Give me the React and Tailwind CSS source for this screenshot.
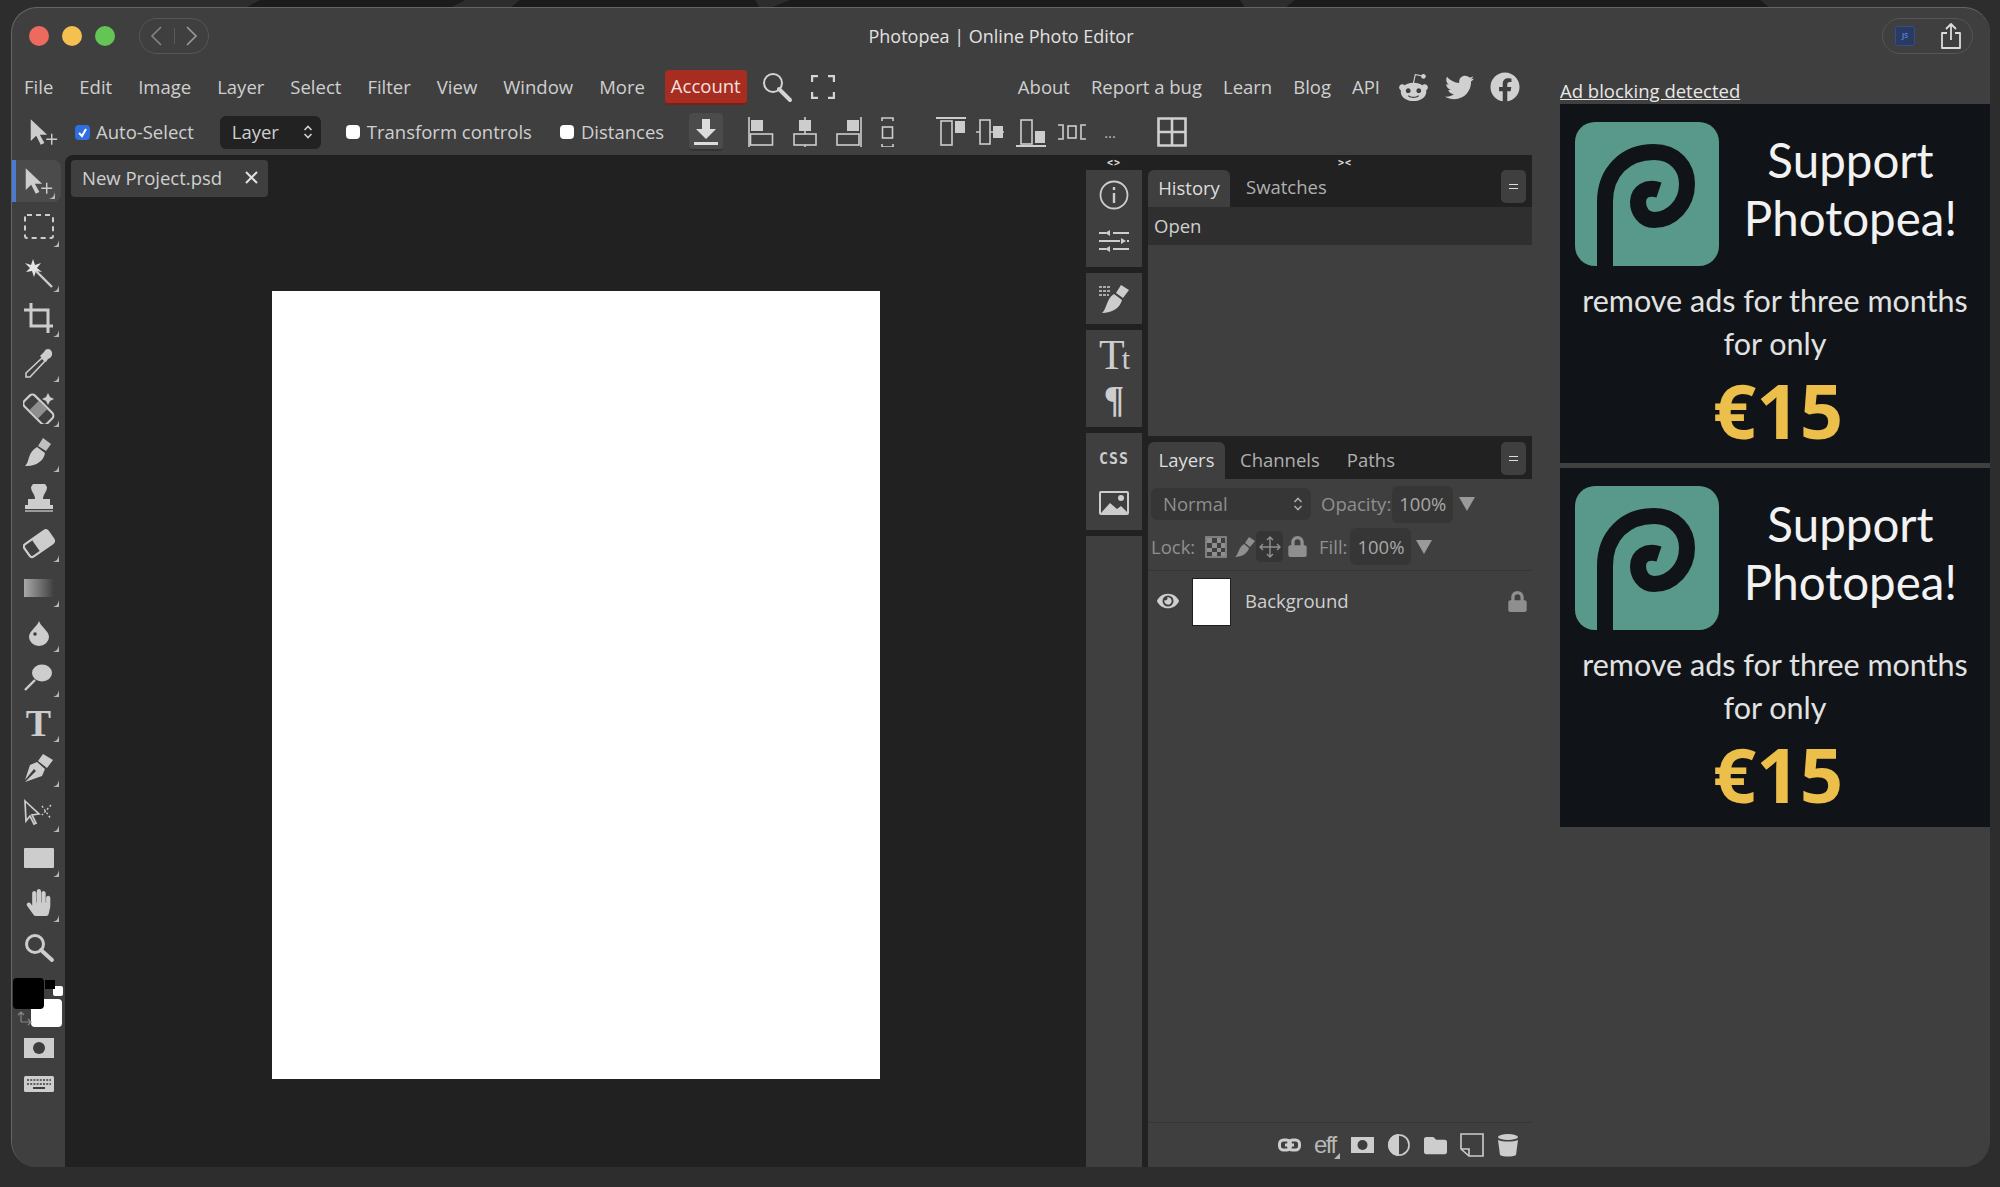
import React from "react";
import { FaTwitter, FaFacebook, FaRedditAlien, FaHandPaper, FaEye, FaLock, FaFolder } from "react-icons/fa";

const C = "#cdcdcd";
const Svg = ({ w = 32, h = 32, vb, children, className = "" }) => (
  <svg width={w} height={h} viewBox={vb || `0 0 ${w} ${h}`} className={`block shrink-0 ${className}`} fill={C}>{children}</svg>
);

const Corner = () => (
  <svg width="9" height="9" viewBox="0 0 9 9" className="absolute right-[5px] bottom-[2px]" fill="#b8b8b8"><path d="M8 1V8H1C4 8 7 6 8 1Z" /></svg>
);

const MoveIcon = () => (
  <svg width="31" height="28" viewBox="0 0 34 30" className="block shrink-0" fill={C}>
    <path d="M3 1V25L9 19L14 29L18 27L13 18H21Z" />
    <path d="M26 17V29M20 23H32" stroke={C} strokeWidth="1.6" />
  </svg>
);
const tools = [
  { c: <MoveIcon />, a: true, m: true },
  { c: <Svg><rect x="2" y="3" width="28" height="23" rx="2" fill="none" stroke={C} strokeWidth="2" strokeDasharray="5 4" /></Svg>, m: true },
  { c: <Svg><path d="M10 2L12 8L18 6L14 11L19 15L13 14L11 20L9 14L3 15L7 11L2 6L8 8Z" fill="#e4e4e4" /><path d="M13 14L29 30" stroke={C} strokeWidth="2.4" /></Svg>, m: true },
  { c: <Svg><path d="M8 1V24H30M1 8H25V31" fill="none" stroke={C} strokeWidth="3" /></Svg>, m: true },
  { c: <Svg><path d="M19 11L3 26L3 30L7 30L22 14Z" fill="none" stroke={C} strokeWidth="1.6" /><path d="M17 9L23 15L25 12L27 11C31 8 29 2 25 2C23 2 22 3 21 5L19 7Z" /></Svg>, m: true },
  { c: <Svg><g transform="rotate(45 15 18)"><rect x="-1" y="10" width="32" height="15" rx="4" fill="none" stroke={C} strokeWidth="2.2" /><rect x="9" y="11" width="12" height="13" fill="#8e8e8e" /></g><path d="M25 1L27 5L31 7L27 9L25 13L23 9L19 7L23 5Z" /></Svg>, m: true },
  { c: <Svg><path d="M20 1L28 7L23 14L15 9Z" fill="#bfbfbf" /><path d="M14 10L22 16C21 24 12 30 2 29C7 25 4 16 14 10Z" /></Svg>, m: true },
  { c: <Svg><path d="M10 2H22L24 5C24 10 20 12 20 17H27V23H5V17H12C12 12 8 10 8 5Z" /><rect x="2" y="23" width="28" height="4" /><rect x="2" y="28" width="28" height="2" fill="#9a9a9a" /></Svg> },
  { c: <Svg><g transform="rotate(-35 16 16)"><rect x="1" y="9" width="29" height="15" rx="3" fill="none" stroke={C} strokeWidth="2.2" /><rect x="12" y="9" width="18" height="15" rx="2" /></g></Svg>, m: true },
  { c: <svg width="30" height="18" className="block"><defs><linearGradient id="gr" x1="0" x2="1"><stop offset="0" stopColor="#a8a8a8" /><stop offset="1" stopColor="#3f3f3f" /></linearGradient></defs><rect width="30" height="18" fill="url(#gr)" /></svg>, m: true },
  { c: <Svg h={26} w={24}><path d="M12 1C14 7 22 11 22 17A10 9 0 0 1 2 17C2 11 10 7 12 1Z" /><circle cx="8" cy="14" r="1.8" fill="#3d3d3d" /></Svg>, m: true },
  { c: <Svg><ellipse cx="19" cy="11" rx="10" ry="8.5" /><path d="M12 18L2 28" stroke={C} strokeWidth="2.4" /></Svg>, m: true },
  { c: <span className="block font-['Liberation_Serif',serif] text-[38px] font-bold leading-[30px] text-[#cdcdcd]">T</span>, m: true },
  { c: <Svg><path d="M20 2L30 8L24 16L15 9Z" /><path d="M14 10L22 17L19 24L2 30L13 19L11 17L2 28L7 13Z" /></Svg>, m: true },
  { c: <Svg><path d="M2 4L16 17L9 18L13 26L11 27L7 19L3 24Z" fill="none" stroke={C} strokeWidth="1.7" /><path d="M28 8L19 18M19 9L28 22" stroke={C} strokeWidth="1.4" strokeDasharray="2 2" /></Svg>, m: true },
  { c: <div className="h-[20px] w-[30px] rounded-[1px] bg-[#cdcdcd]" />, m: true },
  { c: <FaHandPaper size={27} color={C} />, m: true },
  { c: <Svg><circle cx="12" cy="12" r="8.5" fill="none" stroke={C} strokeWidth="3" /><path d="M18 18L29 28" stroke={C} strokeWidth="4" strokeLinecap="round" /></Svg> },
];

const Tool = ({ c, a, m }) => (
  <div className={a ? "h-[45px]" : "contents"}>
    <div className={`relative flex items-center justify-center ${a ? "mr-[4px] h-[42px] rounded-r-lg border-l-[4px] border-[#4a7bd0] bg-[#4b4b4b]" : "h-[45px]"}`}>
      {c}
      {m && <Corner />}
    </div>
  </div>
);

const Colors = () => (
  <div className="relative mt-[8px] h-[49px]">
    <div className="absolute left-[41px] top-[8px] h-[10px] w-[10px] rounded-[2px] bg-white" />
    <div className="absolute left-[33px] top-[2px] h-[9px] w-[10px] bg-black" />
    <div className="absolute left-[19px] top-[21px] h-[28px] w-[31px] rounded-[4px] bg-white" />
    <div className="absolute left-[1px] top-[0px] h-[31px] w-[31px] rounded-[4px] bg-black" />
    <svg width="18" height="16" className="absolute left-[3px] top-[32px]" fill="none" stroke="#888" strokeWidth="1.2"><path d="M6 12V3M3 5L6 2L9 5M6 12H16M13 9L16 12L13 15" /></svg>
  </div>
);

const Mask = ({ w = 30, h = 18, r = 6 }) => (
  <svg width={w} height={h} className="block shrink-0"><rect width={w} height={h} fill={C} /><ellipse cx={w / 2} cy={h / 2} rx={r} ry={r} fill="#3d3d3d" /></svg>
);
const Keyboard = () => (
  <Svg w={30} h={16}>
    <rect width="30" height="16" rx="1.5" />
    <path d="M3 4H27M3 8H27" stroke="#3d3d3d" strokeWidth="1.6" strokeDasharray="2 1.2" />
    <path d="M9 12H21" stroke="#3d3d3d" strokeWidth="1.8" />
  </Svg>
);

const S = "none";
const AlignL = ({ k }) => {
  const icons = {
    l: <><path d="M1 0V30" stroke={C} strokeWidth="1.6" /><rect x="3" y="3" width="12" height="11" /><rect x="2.5" y="17" width="22" height="11" fill={S} stroke={C} strokeWidth="1.6" /></>,
    c: <><path d="M13 0V30" stroke={C} strokeWidth="1.6" /><rect x="7" y="3" width="12" height="11" /><rect x="2" y="17" width="22" height="11" fill="#3f3f3f" stroke={C} strokeWidth="1.6" /></>,
    r: <><path d="M25 0V30" stroke={C} strokeWidth="1.6" /><rect x="11" y="3" width="12" height="11" /><rect x="1" y="17" width="22" height="11" fill={S} stroke={C} strokeWidth="1.6" /></>,
    d: <><path d="M2 4V1H13V4M2 27V30H13V27" stroke={C} strokeWidth="1.6" fill="none" /><rect x="2.5" y="10" width="10" height="11" fill={S} stroke={C} strokeWidth="1.6" /></>,
    t: <><path d="M0 1H30" stroke={C} strokeWidth="2" /><rect x="5" y="4" width="11" height="24" fill={S} stroke={C} strokeWidth="1.6" /><rect x="19" y="4" width="10" height="12" /></>,
    m: <><path d="M0 15H28" stroke={C} strokeWidth="1.6" /><rect x="4" y="3" width="10" height="24" fill="#3f3f3f" stroke={C} strokeWidth="1.6" /><rect x="17" y="9" width="10" height="12" /></>,
    b: <><path d="M0 29H30" stroke={C} strokeWidth="2" /><rect x="5" y="3" width="11" height="24" fill={S} stroke={C} strokeWidth="1.6" /><rect x="19" y="14" width="10" height="12" /></>,
    h: <><path d="M2 8H7V22H2M30 8H25V22H30" fill="none" stroke={C} strokeWidth="1.6" /><rect x="12" y="9" width="8" height="12" fill={S} stroke={C} strokeWidth="1.6" /></>,
  };
  return <svg width="30" height="30" className="block shrink-0" fill={C}>{icons[k]}</svg>;
};

const Check = ({ on }) => (
  on
    ? <span className="flex h-[15px] w-[15px] items-center justify-center rounded-[4px] bg-[#2f6fe0]"><svg width="11" height="11" fill="none" stroke="#fff" strokeWidth="2"><path d="M2 6L5 9L9 2" /></svg></span>
    : <span className="block h-[14px] w-[14px] rounded-[4px] bg-white" />
);
const Chevrons = ({ c = "#cfcfcf" }) => (
  <svg width="10" height="16" fill="none" stroke={c} strokeWidth="1.6" className="block shrink-0"><path d="M1.5 6L5 2.5L8.5 6M1.5 10L5 13.5L8.5 10" /></svg>
);

const menu = ["File", "Edit", "Image", "Layer", "Select", "Filter", "View", "Window", "More"];

const Ad = () => (
  <div className="flex h-[359px] flex-col bg-[#101418] text-center font-['Lato',sans-serif]">
    <div className="flex items-start pl-[15px] pt-[18px]">
      <svg width="144" height="144" viewBox="0 0 144 144" className="block shrink-0 rounded-[20px] bg-[#58998b]">
        <path d="M30 144V80C30 50 50 30 79 30C100 30 112 45 112 62C112 82 97 98 79 98C68 98 63 88 63 80C63 70 72 64 84 68" fill="none" stroke="#101418" strokeWidth="16" />
      </svg>
      <div className="flex-1 pr-[8px] pt-[9px] text-[47.5px] leading-[58px] text-[#f2f2f2]">Support<br />Photopea!</div>
    </div>
    <div className="mt-[13px] text-[30.5px] leading-[43px] text-[#e2e2e2]">remove ads for three months<br />for only</div>
    <div className="mt-[7px] pl-[6px] font-['Open_Sans',sans-serif] text-[76px] font-bold leading-[76px] text-[#ecbf4b]">€15</div>
  </div>
);

export default function App() {
  return (
    <div className="relative h-[1187px] w-[2000px] overflow-hidden bg-[#2d2d2d] pl-[11px] pr-[10px] pt-[7px] font-['Open_Sans',sans-serif] text-[18.5px] text-[#cfcfcf]">
      <svg width="2000" height="8" className="absolute left-0 top-0" fill="#1b1b1b">
        <path d="M245 8L260 0H465L450 8ZM510 8L520 0H755L760 8ZM770 8L790 0H1240L1245 8ZM1285 8L1295 0H1760L1770 8Z" />
      </svg>
      <div className="relative flex h-[1160px] w-[1979px] flex-col overflow-hidden rounded-[26px] border-l border-t border-[#666666] bg-[#3f3f3f]">
        {/* title bar */}
        <div className="flex h-[56px] shrink-0 items-center justify-between pl-[17px] pr-[17px]">
          <div className="flex w-[300px] items-center">
            <span className="h-[20px] w-[20px] rounded-full bg-[#ec6a5e]" />
            <span className="ml-[13px] h-[20px] w-[20px] rounded-full bg-[#f4c04f]" />
            <span className="ml-[13px] h-[20px] w-[20px] rounded-full bg-[#62c554]" />
            <div className="ml-[24px] flex h-[36px] w-[70px] items-center justify-between rounded-full border border-[#565656] px-[10px]">
              <svg width="12" height="22" fill="none" stroke="#858585" strokeWidth="1.6"><path d="M11 2L2 11L11 20" /></svg>
              <span className="h-[16px] w-px bg-[#5a5a5a]" />
              <svg width="12" height="22" fill="none" stroke="#9a9a9a" strokeWidth="1.6"><path d="M1 2L10 11L1 20" /></svg>
            </div>
          </div>
          <div className="text-[18px] text-[#e2e2e2]">Photopea | Online Photo Editor</div>
          <div className="flex w-[300px] justify-end">
            <div className="flex h-[36px] w-[91px] items-center justify-between rounded-full border border-[#565656] pl-[12px] pr-[10px]">
              <span className="flex h-[20px] w-[20px] items-center justify-center rounded-[3px] border border-[#2d4f95] bg-[#2a3a60] text-[7px] font-bold text-[#4f7fd8]">JS</span>
              <svg width="22" height="28" fill="none" stroke="#dcdcdc" strokeWidth="1.8"><path d="M11 18V2M6 7L11 2L16 7M7 11H2V26H20V11H15" strokeLinejoin="round" /></svg>
            </div>
          </div>
        </div>

        <div className="flex min-h-0 flex-1">
          {/* app */}
          <div className="flex w-[1520px] shrink-0 flex-col">
            <div className="flex h-[42px] shrink-0 items-center pl-[12px] pt-[4px]">
              <div className="flex items-center gap-[26px]">
                {menu.map((m) => <span key={m}>{m}</span>)}
              </div>
              <span className="ml-[20px] flex h-[35px] items-center rounded-[4px] border-b-2 border-[#7d2018] bg-[#a92c21] px-[6px] text-[#f1e2e0]">Account</span>
              <svg width="32" height="32" fill="none" stroke="#d4d4d4" className="ml-[14px] block"><circle cx="12" cy="12" r="9" strokeWidth="2" /><path d="M18 18L29 29" strokeWidth="4" strokeLinecap="round" /></svg>
              <svg width="24" height="24" fill="none" stroke="#d4d4d4" strokeWidth="2.4" className="ml-[18px] block"><path d="M1 7V1H7M17 1H23V7M23 17V23H17M7 23H1V17" /></svg>
              <div className="ml-auto flex items-center gap-[21px]">
                <span>About</span><span>Report a bug</span><span>Learn</span><span>Blog</span><span>API</span>
              </div>
              <div className="ml-[18px] mr-[12px] flex items-center gap-[16px]">
                <FaRedditAlien size={31} color="#d0d0d0" />
                <FaTwitter size={29} color="#d0d0d0" />
                <FaFacebook size={30} color="#d0d0d0" />
              </div>
            </div>
            <div className="flex h-[49px] shrink-0 items-center pl-[16px] pt-[3px]">
              <MoveIcon />
              <span className="ml-[16px]"><Check on /></span>
              <span className="ml-[6px]">Auto-Select</span>
              <span className="ml-[26px] flex h-[33px] w-[101px] items-center justify-between rounded-[6px] bg-[#222222] pl-[12px] pr-[8px]">Layer <Chevrons /></span>
              <span className="ml-[25px]"><Check /></span>
              <span className="ml-[7px]">Transform controls</span>
              <span className="ml-[28px]"><Check /></span>
              <span className="ml-[7px]">Distances</span>
              <span className="ml-[25px] flex h-[38px] w-[34px] items-center justify-center rounded-[4px] border-b-2 border-[#333333] bg-[#4b4b4b]">
                <svg width="26" height="30" fill="#dcdcdc"><path d="M9 3H17V13H23L13 23L3 13H9Z" /><rect x="1" y="26" width="24" height="3" /></svg>
              </span>
              <div className="ml-[25px] flex items-center gap-[14px]">
                <AlignL k="l" /><AlignL k="c" /><AlignL k="r" /><span className="w-[16px]"><AlignL k="d" /></span>
              </div>
              <div className="ml-[40px] flex items-center gap-[10px]">
                <AlignL k="t" /><AlignL k="m" /><AlignL k="b" /><AlignL k="h" />
              </div>
              <span className="ml-[18px] w-[18px] text-[15px] leading-[15px] text-[#bbbbbb]">...</span>
              <svg width="30" height="30" fill="none" stroke="#d0d0d0" strokeWidth="2.6" className="ml-[35px] block"><path d="M1.5 1.5H28.5V28.5H1.5ZM15 1.5V28.5M1.5 15H28.5" /></svg>
            </div>

            <div className="flex min-h-0 flex-1">
              {/* tools */}
              <div className="w-[53px] shrink-0 bg-[#3f3f3f] pt-[5px]">
                {tools.map((t, i) => <Tool key={i} {...t} />)}
                <Colors />
                <div className="flex h-[42px] items-center justify-center"><Mask w={30} h={20} r={6} /></div>
                <div className="flex h-[30px] items-center justify-center"><Keyboard /></div>
              </div>
              {/* dark workspace */}
              <div className="flex min-w-0 flex-1 rounded-tl-lg bg-[#212121]">
                <div className="flex min-w-0 flex-1 flex-col pl-[6px] pt-[5px]">
                  <div className="flex h-[37px] w-[197px] items-center justify-between rounded-[4px] bg-[#3f3f3f] pb-[2px] pl-[11px] pr-[10px]">
                    New Project.psd
                    <svg width="13" height="13" stroke="#e0e0e0" strokeWidth="2"><path d="M1 1L12 12M12 1L1 12" /></svg>
                  </div>
                  <div className="ml-[201px] mt-[94px] h-[788px] w-[608px] bg-white" />
                </div>
                <div className="flex w-[56px] shrink-0 flex-col">
                  <div className="h-[15px] text-center font-['DejaVu_Sans_Mono',monospace] text-[10px] font-bold leading-[15px] tracking-[1px] text-[#dddddd]">&lt;&gt;</div>
                  <div className="flex h-[97px] flex-col items-center justify-start gap-[19px] bg-[#3f3f3f] pt-[10px]">
                    <svg width="30" height="30" fill="none" stroke={C} strokeWidth="1.8"><circle cx="15" cy="15" r="13.5" /><path d="M15 13V23M15 7V10" strokeWidth="2.4" /></svg>
                    <svg width="30" height="24" fill={C} stroke={C} strokeWidth="1.8"><path d="M0 4H7M14 4H30M0 12H21M28 12H30M0 20H7M14 20H30" /><path d="M11 1L6 4L11 7ZM22 9L27 12L22 15ZM11 17L6 20L11 23Z" stroke="none" /></svg>
                  </div>
                  <div className="mt-[6px] flex h-[51px] items-center justify-center bg-[#3f3f3f]">
                    <svg width="30" height="30" fill={C}><path d="M22 1L30 6L24 14L17 9Z" /><path d="M15 10L23 16C21 24 13 29 3 29C8 25 7 15 15 10Z" /><path d="M0 3H12M0 7H12M0 11H10" stroke={C} strokeWidth="1.4" strokeDasharray="3 1" /></svg>
                  </div>
                  <div className="mt-[6px] flex h-[97px] flex-col items-center justify-start gap-[13px] bg-[#3f3f3f] pt-[9px] font-['Liberation_Serif',serif] text-[#cdcdcd]">
                    <span className="flex h-[32px] items-baseline pl-[1px] text-[42px] leading-[32px]">T<span className="-ml-[3px] text-[30px]">t</span></span>
                    <span className="h-[30px] text-[38px] font-bold leading-[30px]">¶</span>
                  </div>
                  <div className="mt-[6px] flex h-[97px] flex-col items-center justify-start gap-[26px] bg-[#3f3f3f] pt-[20px]">
                    <span className="font-['DejaVu_Sans_Mono',monospace] text-[15px] font-bold uppercase leading-[12px] tracking-[1px] text-[#cdcdcd]">CSS</span>
                    <svg width="30" height="24"><rect width="30" height="24" rx="2" fill={C} /><rect x="2" y="2" width="26" height="20" fill="#3f3f3f" /><path d="M2 22L11 12L18 18L22 15L28 21V22Z" fill={C} /><circle cx="22" cy="7" r="3" fill={C} /></svg>
                  </div>
                  <div className="mt-[6px] flex-1 bg-[#3f3f3f]" />
                </div>
                <div className="ml-[6px] flex w-[384px] shrink-0 flex-col bg-[#3f3f3f]">
                  <div className="h-[15px] shrink-0 bg-[#212121] pl-[190px] font-['DejaVu_Sans_Mono',monospace] text-[10px] font-bold leading-[15px] tracking-[1px] text-[#dddddd]">&gt;&lt;</div>
                  <div className="flex h-[37px] shrink-0 items-start bg-[#212121] pr-[6px]">
                    <span className="flex h-[37px] w-[82px] items-center justify-center rounded-t-[6px] bg-[#3f3f3f] pb-[2px] text-[#dedede]">History</span>
                    <span className="ml-[16px] flex h-[34px] items-center text-[#b0b0b0]">Swatches</span>
                    <span className="ml-auto flex h-[33px] w-[25px] items-center justify-center rounded-[5px] bg-[#3f3f3f]"><span className="h-[5px] w-[9px] border-y border-[#dddddd]" /></span>
                  </div>
                  <div className="flex h-[38px] shrink-0 items-center bg-[#2f2f2f] pl-[6px]">Open</div>
                  <div className="h-[191px] shrink-0" />
                  <div className="flex h-[43px] shrink-0 items-start bg-[#212121] pr-[6px] pt-[6px]">
                    <span className="flex h-[37px] w-[77px] items-center justify-center rounded-t-[6px] bg-[#3f3f3f] pb-[2px] text-[#dedede]">Layers</span>
                    <span className="ml-[15px] flex h-[35px] items-center text-[#b0b0b0]">Channels</span>
                    <span className="ml-[27px] flex h-[35px] items-center text-[#b0b0b0]">Paths</span>
                    <span className="ml-auto flex h-[33px] w-[25px] items-center justify-center rounded-[5px] bg-[#3f3f3f]"><span className="h-[5px] w-[9px] border-y border-[#dddddd]" /></span>
                  </div>
                  <div className="flex h-[50px] shrink-0 items-center pl-[3px] text-[#8f8f8f]">
                    <span className="flex h-[32px] w-[160px] items-center justify-between rounded-[6px] bg-[#363636] pl-[12px] pr-[8px]">Normal <Chevrons c="#aaaaaa" /></span>
                    <span className="ml-[10px]">Opacity:</span>
                    <span className="ml-[1px] flex h-[37px] w-[61px] items-center justify-center rounded-[6px] bg-[#363636] text-[#a8a8a8]">100%</span>
                    <svg width="16" height="16" fill="#9a9a9a" className="ml-[6px] block"><path d="M0 1H16L8 15Z" /></svg>
                  </div>
                  <div className="flex h-[42px] shrink-0 items-center border-b border-[#353535] pb-[6px] pl-[3px] text-[#8f8f8f]">
                    <span className="w-[54px]">Lock:</span>
                    <svg width="22" height="22" className="block"><rect x="1" y="1" width="20" height="20" fill="none" stroke="#8f8f8f" strokeWidth="1.6" /><path d="M2 2H7V7H2ZM12 2H16V7H12ZM7 7H12V12H7ZM16 7H20V12H16ZM2 12H7V16H2ZM12 12H16V16H12ZM7 16H12V20H7ZM16 16H20V20H16Z" fill="#8f8f8f" /></svg>
                    <svg width="22" height="22" fill="#8f8f8f" className="ml-[7px] block"><path d="M15 1L21 5L16 11L11 7Z" /><path d="M10 8L15 12C14 17 8 21 1 21C5 18 4 12 10 8Z" /></svg>
                    <span className="flex h-[31px] w-[27px] items-center justify-center rounded-[5px] bg-[#353535]">
                      <svg width="22" height="22" fill="none" stroke="#8f8f8f" strokeWidth="1.4"><path d="M11 1V21M1 11H21M8 4L11 1L14 4M8 18L11 21L14 18M4 8L1 11L4 14M18 8L21 11L18 14" /></svg>
                    </span>
                    <FaLock size={21} color="#8f8f8f" className="ml-[4px]" />
                    <span className="ml-[11px]">Fill:</span>
                    <span className="ml-[3px] flex h-[37px] w-[61px] items-center justify-center rounded-[6px] bg-[#363636] text-[#a8a8a8]">100%</span>
                    <svg width="16" height="16" fill="#9a9a9a" className="ml-[5px] block"><path d="M0 1H16L8 15Z" /></svg>
                  </div>
                  <div className="flex h-[60px] shrink-0 items-center pl-[9px] pr-[4px]">
                    <FaEye size={22} color="#cfcfcf" />
                    <span className="ml-[13px] mt-[2px] h-[48px] w-[39px] border border-[#1e1e1e] bg-white" />
                    <span className="ml-[14px]">Background</span>
                    <FaLock size={21} color="#8f8f8f" className="ml-auto" />
                  </div>
                  <div className="flex-1" />
                  <div className="flex h-[45px] shrink-0 items-center justify-end gap-[13px] border-t border-[#353535] pr-[13px]">
                    <svg width="23" height="14" fill="none" stroke={C} strokeWidth="3"><rect x="1.5" y="2" width="11" height="10" rx="4" /><rect x="10.5" y="2" width="11" height="10" rx="4" /><path d="M7 7H16" /></svg>
                    <span className="relative block w-[24px] font-['Liberation_Sans',sans-serif] text-[24px] leading-[24px] tracking-[-1.5px] text-[#b8b8b8]">eff<svg width="6" height="6" className="absolute -right-[2px] bottom-[-2px]" fill="#b8b8b8"><path d="M6 0V6H0Z" /></svg></span>
                    <Mask w={23} h={16} r={5} />
                    <svg width="24" height="24"><circle cx="12" cy="12" r="11" fill={C} /><path d="M12 1A11 11 0 0 1 12 23Z" fill="#3f3f3f" /><circle cx="12" cy="12" r="10" fill="none" stroke={C} strokeWidth="1.6" /></svg>
                    <FaFolder size={23} color={C} />
                    <svg width="24" height="24" fill="none" stroke={C} strokeWidth="1.6"><path d="M1 1H23V23H9L1 16Z" /><path d="M1 16H9V23" /></svg>
                    <svg width="22" height="24" fill={C}><ellipse cx="11" cy="4" rx="10" ry="3" /><path d="M1 7C6 9 16 9 21 7L19 22C15 24 7 24 3 22Z" /></svg>
                  </div>
                </div>
              </div>
            </div>
          </div>
          {/* ad column */}
          <div className="ml-[28px] flex min-w-0 flex-1 flex-col">
            <div className="flex h-[40px] shrink-0 items-end leading-[26px] text-[#e8e8e8] underline">Ad blocking detected</div>
            <Ad />
            <div className="mt-[5px]"><Ad /></div>
          </div>
        </div>
      </div>
    </div>
  );
}
